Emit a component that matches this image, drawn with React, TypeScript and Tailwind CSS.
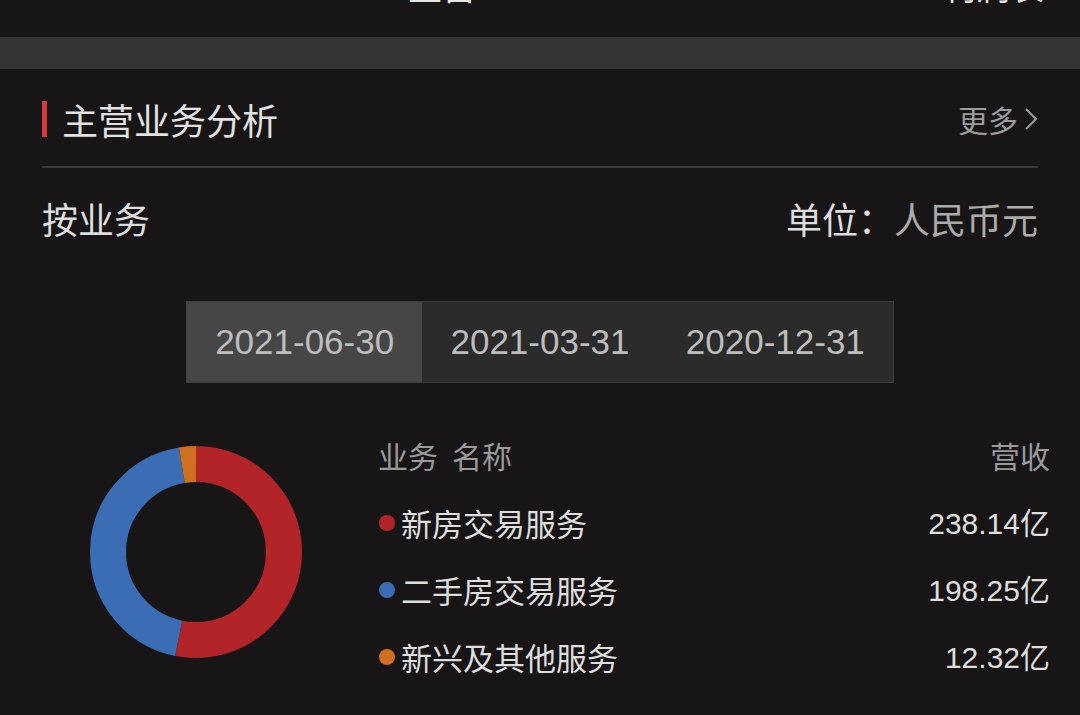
import React from 'react';

const cjk = { fontFamily: '"Noto Sans CJK SC", "Noto Sans", sans-serif' };
const num = { fontFamily: '"Liberation Sans", Arial, sans-serif' };

const items = [
  { name: '新房交易服务', value: 238.14, color: '#b22428' },
  { name: '二手房交易服务', value: 198.25, color: '#3a6db4' },
  { name: '新兴及其他服务', value: 12.32, color: '#cf6f1f' },
];

const dates = ['2021-06-30', '2021-03-31', '2020-12-31'];

function Donut() {
  const r = 88;
  const c = 2 * Math.PI * r;
  const total = items.reduce((s, i) => s + i.value, 0);
  let acc = 0;
  return (
    <svg width="212" height="212" viewBox="0 0 212 212">
      <g transform="rotate(-90 106 106)">
        {items.map((it) => {
          const len = (it.value / total) * c;
          const el = (
            <circle
              key={it.name}
              cx="106"
              cy="106"
              r={r}
              fill="none"
              stroke={it.color}
              strokeWidth="36"
              strokeDasharray={`${len} ${c - len}`}
              strokeDashoffset={-acc}
            />
          );
          acc += len;
          return el;
        })}
      </g>
    </svg>
  );
}

export default function App() {
  return (
    <div className="w-[1080px] h-[715px] bg-[#171516] overflow-hidden flex flex-col" style={cjk}>
      {/* top bar, scrolled mostly out of view */}
      <div className="h-[37px] overflow-hidden flex text-[34px] leading-[34px] text-[#e6e6e6]">
        <div className="mt-[-31px] ml-[408px]">主营</div>
        <div className="mt-[-31px] ml-auto mr-[36px]">利润表</div>
      </div>
      <div className="h-[32px] bg-[#333333]" />

      <div className="px-[42px]">
        <div className="h-[97px] flex items-center pt-[2px]">
          <div className="w-[5px] h-[36px] bg-[#d63a3a]" />
          <div className="ml-[15px] text-[36px] text-[#e2e2e2] leading-none">主营业务分析</div>
          <div className="ml-auto flex items-center text-[30px] text-[#9c9c9c] leading-none">
            更多
            <svg width="14" height="24" viewBox="0 0 14 24" className="ml-[6px]">
              <polyline points="2,2 12,12 2,22" fill="none" stroke="#9c9c9c" strokeWidth="2" />
            </svg>
          </div>
        </div>
        <div className="h-[2px] bg-[#3a3a3a]" />
        <div className="h-[100px] flex items-center text-[36px] leading-none">
          <div className="text-[#dedede]">按业务</div>
          <div className="ml-auto text-[#dedede]">单位：</div>
          <div className="text-[#ababab]">人民币元</div>
        </div>
      </div>

      <div className="mt-[33px] mx-auto w-[708px] h-[82px] flex bg-[#2b2b2b] border border-[#3c3c3c]" style={num}>
        {dates.map((d, i) => (
          <div
            key={d}
            className={`flex-1 flex items-center justify-center text-[35px] text-[#bdbdbd] ${i === 0 ? 'bg-[#464646]' : ''}`}
          >
            {d}
          </div>
        ))}
      </div>

      <div className="flex pl-[90px] pr-[30px]">
        <div className="mt-[63px]">
          <Donut />
        </div>
        <div className="ml-[76px] flex-1">
          <div className="mt-[52px] h-[40px] flex items-center justify-between text-[30px] text-[#9a9a9a] leading-none">
            <span>
              业务<span className="inline-block w-[14px]" />名称
            </span>
            <span>营收</span>
          </div>
          <div className="mt-[14px]">
            {items.map((it) => (
              <div key={it.name} className="h-[67px] flex items-center">
                <span className="w-[16px] h-[16px] rounded-full ml-[1px]" style={{ backgroundColor: it.color }} />
                <span className="ml-[6px] text-[31px] text-[#dedede] leading-none">{it.name}</span>
                <span className="ml-auto text-[30px] text-[#dedede] leading-none">
                  <span style={num}>{it.value.toFixed(2)}</span>亿
                </span>
              </div>
            ))}
          </div>
        </div>
      </div>
    </div>
  );
}
